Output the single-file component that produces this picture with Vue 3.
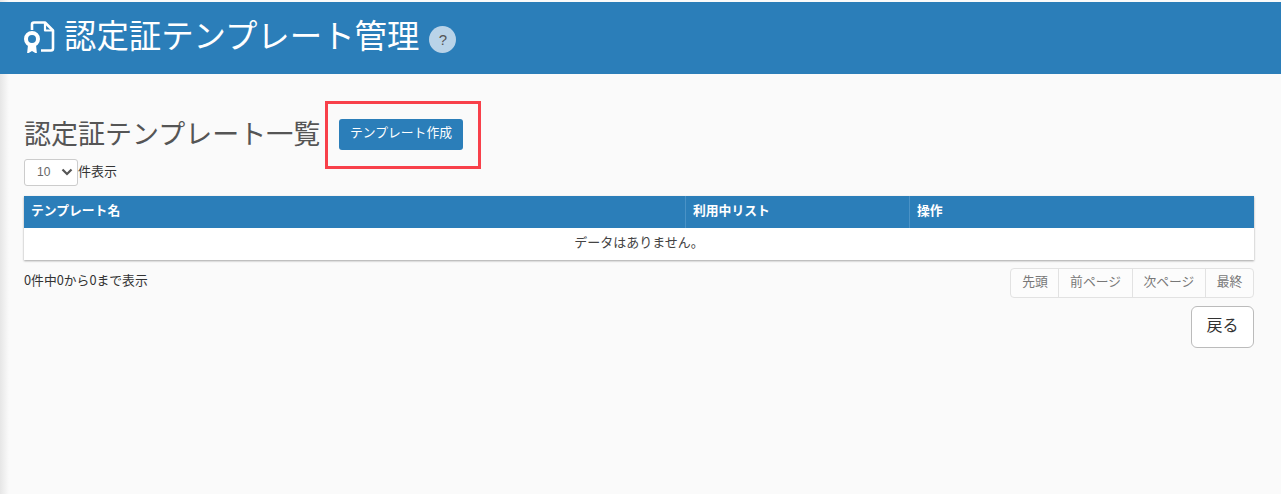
<script setup>
const columns = [
  { label: 'テンプレート名', cls: 'col-name' },
  { label: '利用中リスト', cls: 'col-list' },
  { label: '操作', cls: 'col-op' },
]
const pages = ['先頭', '前ページ', '次ページ', '最終']
</script>

<template>
  <div class="page">
    <header class="banner">
      <svg class="doc-icon" width="34" height="34" viewBox="0 0 34 34" fill="none">
        <path d="M10 11V5.500a2 2 0 0 1 2-2h11l8 8v18a2 2 0 0 1-2 2H19" stroke="#fff" stroke-width="2.600" stroke-linejoin="round" />
        <path d="M23 3.500v8h8" stroke="#fff" stroke-width="2.200" stroke-linejoin="round" />
        <path d="M6 26l-1 9 5-3 5 3-1-9z" fill="#fff" />
        <circle cx="10" cy="20" r="6" fill="#2b7eb9" stroke="#fff" stroke-width="4" />
      </svg>
      <h1 class="title">認定証テンプレート管理</h1>
      <span class="help">?</span>
    </header>

    <main class="content">
      <div class="heading-row">
        <h2 class="subtitle">認定証テンプレート一覧</h2>
        <div class="create-frame">
          <button class="create-btn" type="button">テンプレート作成</button>
        </div>
      </div>

      <div class="length-row">
        <div class="select-box">
          <span class="select-value">10</span>
          <svg width="12" height="8" viewBox="0 0 12 8" fill="none">
            <path d="M1.500 1.500L6 6l4.500-4.500" stroke="#555" stroke-width="2.200" />
          </svg>
        </div>
        <span class="length-label">件表示</span>
      </div>

      <div class="table">
        <div class="thead">
          <div v-for="c in columns" :key="c.label" class="th" :class="c.cls">{{ c.label }}</div>
        </div>
        <div class="empty">データはありません。</div>
      </div>

      <div class="footer-row">
        <span class="info">0件中0から0まで表示</span>
        <div class="pager">
          <span v-for="p in pages" :key="p" class="page-item">{{ p }}</span>
        </div>
      </div>

      <div class="back-row">
        <button class="back-btn" type="button">戻る</button>
      </div>
    </main>
  </div>
</template>

<style>
html, body { margin: 0; background: #fafafa; }
</style>

<style scoped>
.page {
  height: 494px;
  overflow: hidden;
  box-sizing: border-box;
  padding-top: 2px;
  background: linear-gradient(to right, #e6e6e6 0, #fafafa 9px);
  font-family: "Noto Sans CJK JP", "Noto Sans", sans-serif;
  color: #333;
}
.banner {
  height: 72px;
  display: flex;
  align-items: center;
  padding-left: 22px;
  background: #2b7eb9;
  color: #fff;
}
.doc-icon { margin-bottom: 5px; margin-right: 8px; flex: none; }
.title {
  margin: 0;
  padding-bottom: 8px;
  font-size: 32.400px;
  font-weight: 400;
  line-height: 1;
  white-space: nowrap;
}
.help {
  width: 27px;
  height: 27px;
  margin-left: 10px;
  margin-top: 2px;
  border-radius: 50%;
  background: #b9d3e8;
  color: #555;
  font: 400 15px/1 "Liberation Sans", sans-serif;
  display: flex;
  align-items: center;
  justify-content: center;
}
.content { padding: 27px 27px 0 24px; }
.heading-row { display: flex; align-items: center; height: 68px; }
.subtitle {
  margin: 0;
  width: 302px;
  padding-bottom: 6px;
  font-size: 27px;
  font-weight: 400;
  line-height: 1;
  color: #555;
  white-space: nowrap;
}
.create-frame {
  box-sizing: border-box;
  width: 156px;
  height: 68px;
  border: 3px solid #f8404a;
  padding: 15px 0 0 11px;
  margin-left: -1px;
}
.create-btn {
  display: block;
  box-sizing: border-box;
  width: 124px;
  height: 31px;
  padding: 0 0 5px;
  border: 0;
  border-radius: 3px;
  background: #2b7eb9;
  color: #fff;
  font: 12.800px/1 "Noto Sans CJK JP", sans-serif;
}
.length-row {
  display: flex;
  align-items: center;
  margin-top: -10px;
  height: 27px;
  font-size: 13px;
  color: #333;
}
.length-label { padding-bottom: 5px; }
.select-box {
  box-sizing: border-box;
  width: 54px;
  height: 27px;
  display: flex;
  align-items: center;
  justify-content: space-between;
  padding: 0 4px 1px 12px;
  border: 1px solid #ccc;
  border-radius: 3px;
  background: #fff;
  font: 12px/1 "Liberation Sans", sans-serif;
  color: #666;
}
.table {
  margin-top: 10px;
  background: #fff;
  box-shadow: 0 1px 2px rgba(0, 0, 0, .35);
}
.thead { display: flex; height: 32px; background: #2b7eb9; }
.th {
  box-sizing: border-box;
  padding-left: 7px;
  padding-bottom: 6px;
  display: flex;
  align-items: center;
  color: #fff;
  font-size: 12.800px;
  font-weight: 700;
  border-left: 1px solid #4a92c6;
}
.col-name { width: 661px; border-left: 0; padding-left: 7px; }
.col-list { width: 224px; }
.col-op { flex: 1; }
.empty {
  box-sizing: border-box;
  height: 32px;
  padding-bottom: 5px;
  display: flex;
  align-items: center;
  justify-content: center;
  font-size: 13px;
  color: #444;
}
.footer-row {
  display: flex;
  justify-content: space-between;
  align-items: flex-start;
  margin-top: 8px;
}
.info { font-size: 12.800px; line-height: 24px; color: #333; }
.pager {
  display: flex;
  height: 30px;
  box-sizing: border-box;
  border: 1px solid #e2e2e2;
  border-radius: 4px;
  background: #fcfcfc;
}
.page-item {
  padding: 0 10.700px 6px;
  display: flex;
  align-items: center;
  font-size: 12.800px;
  color: #777;
  border-left: 1px solid #e2e2e2;
}
.page-item:first-child { border-left: 0; }
.back-row { display: flex; justify-content: flex-end; margin-top: 8px; }
.back-btn {
  box-sizing: border-box;
  width: 63px;
  height: 42px;
  padding: 0 0 6px;
  border: 1px solid #bbb;
  border-radius: 6px;
  background: #fff;
  color: #333;
  font: 16px/1 "Noto Sans CJK JP", sans-serif;
}
</style>
